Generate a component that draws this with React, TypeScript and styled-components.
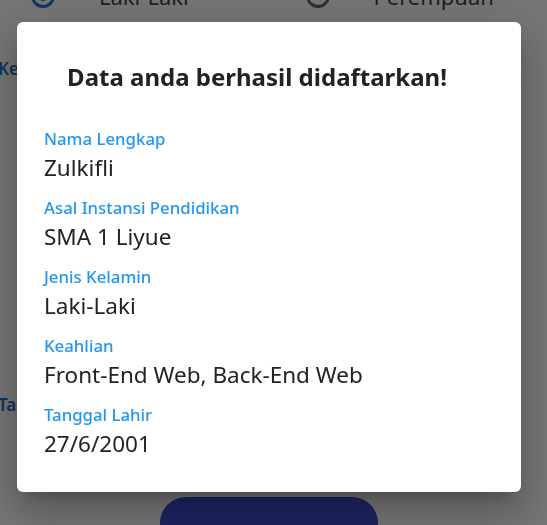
import styled, { createGlobalStyle } from 'styled-components'

const GlobalStyle = createGlobalStyle`
  html, body {
    margin: 0;
    padding: 0;
    overflow: hidden;
  }
  body {
    font-family: 'Noto Sans', 'Open Sans', sans-serif;
  }
`

const Page = styled.div`
  height: 525px;
  background-color: #ffffff;
  overflow: hidden;
`

const Form = styled.div`
  display: flex;
  flex-direction: column;
  margin: -18px 0 0 -2px;
`

const RadioRow = styled.div`
  display: flex;
  align-items: center;
  height: 28px;
`

const RadioOption = styled.label`
  display: flex;
  align-items: center;
  gap: 44px;
  width: 274px;
  padding-left: 33px;
  font-size: 22px;
  color: #444444;
`

const RadioCircle = styled.span<{ $checked?: boolean }>`
  width: 24px;
  height: 24px;
  box-sizing: border-box;
  border-radius: 50%;
  border: 3px solid ${({ $checked }) => ($checked ? '#1976d2' : '#666666')};
  display: flex;
  align-items: center;
  justify-content: center;

  &::after {
    content: '';
    width: 10px;
    height: 10px;
    border-radius: 50%;
    background: ${({ $checked }) => ($checked ? '#1976d2' : 'transparent')};
  }
`

const FieldLabel = styled.div<{ $top: number }>`
  margin-top: ${({ $top }) => $top}px;
  font-size: 17px;
  font-weight: 600;
  color: #1f6fc2;
`

const SubmitButton = styled.button`
  align-self: flex-start;
  margin: 81px 0 0 162px;
  width: 218px;
  height: 52px;
  border: none;
  border-radius: 26px;
  background-color: #3f4ecf;
`

const Backdrop = styled.div`
  position: fixed;
  inset: 0;
  background-color: rgba(0, 0, 0, 0.54);
  display: flex;
  align-items: flex-start;
  padding: 22px 0 0 17px;
`

const Modal = styled.div`
  width: 504px;
  box-sizing: border-box;
  padding: 39px 27px 33px;
  background-color: #ffffff;
  border-radius: 6px;
  box-shadow: 0px 11px 15px -7px rgba(0, 0, 0, 0.2),
    0px 24px 38px 3px rgba(0, 0, 0, 0.14), 0px 9px 46px 8px rgba(0, 0, 0, 0.12);
`

const Title = styled.h2`
  margin: 0 0 36px;
  padding-right: 24px;
  text-align: center;
  font-size: 24px;
  line-height: 32px;
  font-weight: 700;
  color: #222222;
`

const List = styled.div`
  display: flex;
  flex-direction: column;
  gap: 15px;
`

const Item = styled.div`
  display: flex;
  flex-direction: column;
  gap: 4px;
`

const Label = styled.div`
  font-size: 16.8px;
  line-height: 20px;
  font-weight: 500;
  color: #2196f3;
`

const Value = styled.div`
  font-size: 22.5px;
  line-height: 30px;
  color: #222222;
`

const data = [
  { label: 'Nama Lengkap', value: 'Zulkifli' },
  { label: 'Asal Instansi Pendidikan', value: 'SMA 1 Liyue' },
  { label: 'Jenis Kelamin', value: 'Laki-Laki' },
  { label: 'Keahlian', value: 'Front-End Web, Back-End Web' },
  { label: 'Tanggal Lahir', value: '27/6/2001' },
]

export default function App() {
  return (
    <>
      <GlobalStyle />
      <Page>
        <Form>
          <RadioRow>
            <RadioOption>
              <RadioCircle $checked />
              Laki-Laki
            </RadioOption>
            <RadioOption>
              <RadioCircle />
              Perempuan
            </RadioOption>
          </RadioRow>
          <FieldLabel $top={47}>Keahlian</FieldLabel>
          <FieldLabel $top={313}>Tanggal Lahir</FieldLabel>
          <SubmitButton />
        </Form>
      </Page>
      <Backdrop>
        <Modal>
          <Title>Data anda berhasil didaftarkan!</Title>
          <List>
            {data.map((item) => (
              <Item key={item.label}>
                <Label>{item.label}</Label>
                <Value>{item.value}</Value>
              </Item>
            ))}
          </List>
        </Modal>
      </Backdrop>
    </>
  )
}
